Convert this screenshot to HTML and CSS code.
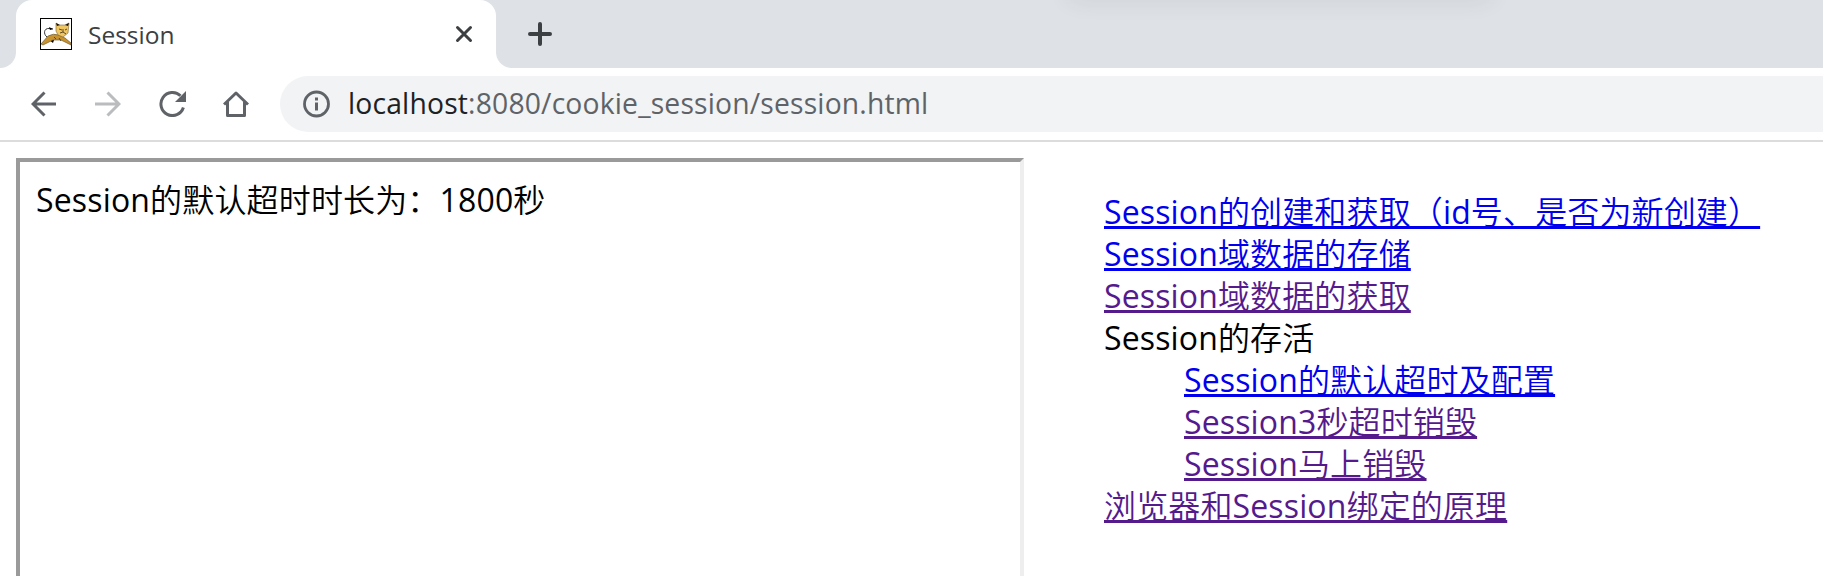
FILE: index.html
```html
<!DOCTYPE html>
<html lang="zh-CN">
<head>
<meta charset="utf-8">
<title>Session</title>
<link rel="stylesheet" href="styles.css">
</head>
<body>
<header class="tabstrip">
  <div class="tab">
    <svg class="favicon" width="32" height="32" viewBox="0 0 32 32">
      <rect x=".5" y=".5" width="31" height="31" fill="#fff" stroke="#000"/>
      <path d="M7 19C3 16 4 10 9 10.500L13 11" fill="none" stroke="#222" stroke-width=".9"/>
      <path d="M9 9l4 2-3 1zM8 21l6 1-1 3z" fill="#000"/>
      <path d="M1 26L8 18Q13 15 19 17L25 20L31 25V27L21 22L13 22L3 27Z" fill="#c8932f" stroke="#5d4923" stroke-width=".6"/>
      <path d="M16 5l3 2h6l4-2-1 10-5 4-5-2-2-4z" fill="#efc662" stroke="#7b6333" stroke-width=".6"/>
      <path d="M16 5l4 2-3 1zM29 5l-4 2 3 1z" fill="#111"/>
      <path d="M19 11l3 1m5-1l-2 1m-5 3l3-1 3 2m-3-5v3m-9 5l2 2m3-1l2 3" fill="none" stroke="#493d24" stroke-width=".9"/>
    </svg>
    <span class="tab-title">Session</span>
    <svg class="tab-close" width="18" height="18" viewBox="0 0 18 18"><path d="M2.500 2.500l13 13m0-13l-13 13" stroke="#3c4043" stroke-width="3" stroke-linecap="round"/></svg>
  </div>
  <svg class="new-tab" width="24" height="24" viewBox="0 0 24 24"><path d="M12 2v20M2 12h20" stroke="#3c4043" stroke-width="4" stroke-linecap="round"/></svg>
  <div class="top-shadow"></div>
</header>
<nav class="toolbar">
  <svg class="tool" width="26" height="26" viewBox="0 0 26 26"><path d="M25 13H2M13.500 1.500L2 13l11.500 11.500" fill="none" stroke="#5f6368" stroke-width="3"/></svg>
  <svg class="tool" width="26" height="26" viewBox="0 0 26 26"><path d="M0 13h24M12.500 1.500L24 13 12.500 24.500" fill="none" stroke="#babcbe" stroke-width="3"/></svg>
  <svg class="tool" width="28" height="26" viewBox="0 0 28 26"><path d="M21.500 4.800A11.500 11.500 0 1 0 24.400 16.500" fill="none" stroke="#5f6368" stroke-width="3"/><path d="M27 0v11H16z" fill="#5f6368"/></svg>
  <svg class="tool" width="26" height="26" viewBox="0 0 26 26"><path d="M1 13.500L13 2l12 11.500M4.500 11v13.500h17V11" fill="none" stroke="#5f6368" stroke-width="3" stroke-linejoin="round"/></svg>
  <div class="omnibox">
    <svg width="28" height="28" viewBox="0 0 28 28"><circle cx="14.500" cy="14" r="12" fill="none" stroke="#5f6368" stroke-width="2.800"/><path d="M13 7.500h3v3h-3zM13 12.500h3v8h-3z" fill="#5f6368"/></svg>
    <div class="url"><span class="host">localhost</span>:8080/cookie_session/session.html</div>
  </div>
</nav>
<main class="page">
  <section class="frame">Session的默认超时时长为：1800秒</section>
  <ul class="links">
    <li><a class="link" href="#">Session的创建和获取（id号、是否为新创建）</a></li>
    <li><a class="link" href="#">Session域数据的存储</a></li>
    <li><a class="link visited" href="#">Session域数据的获取</a></li>
    <li>Session的存活
      <ul class="sublinks">
        <li><a class="link" href="#">Session的默认超时及配置</a></li>
        <li><a class="link visited" href="#">Session3秒超时销毁</a></li>
        <li><a class="link visited" href="#">Session马上销毁</a></li>
      </ul>
    </li>
    <li><a class="link visited" href="#">浏览器和Session绑定的原理</a></li>
  </ul>
</main>
</body>
</html>
```
FILE: styles.css
```css
* { box-sizing: border-box; }
body {
  margin: 0;
  height: 576px;
  overflow: hidden;
  display: flex;
  flex-direction: column;
  background: #fff;
  color: #000;
  font-family: "Open Sans", "Noto Sans CJK SC DemiLight", "Noto Sans CJK SC", sans-serif;
}
svg { display: block; flex: none; }
.tabstrip {
  position: relative;
  overflow: hidden;
  display: flex;
  flex: none;
  height: 68px;
  padding-left: 16px;
  background: #dee1e6;
}
.tab {
  position: relative;
  display: flex;
  width: 480px;
  padding: 18px 24px 0;
  border-radius: 16px 16px 0 0;
  background: #fff;
}
.tab::before, .tab::after {
  content: "";
  position: absolute;
  bottom: 0;
  width: 16px;
  height: 16px;
}
.tab::before { left: -16px; background: radial-gradient(circle at 0 0, transparent 15.5px, #fff 16.5px); }
.tab::after { right: -16px; background: radial-gradient(circle at 100% 0, transparent 15.5px, #fff 16.5px); }
.tab-title {
  flex: 1;
  margin-left: 16px;
  font-size: 24.5px;
  line-height: 34px;
  color: #3c4043;
}
.tab-close { margin: 7px -1px 0 0; }
.new-tab { margin: 22px 0 0 32px; }
.top-shadow {
  position: absolute;
  left: 1070px;
  top: -22px;
  width: 420px;
  height: 18px;
  box-shadow: 0 2px 24px rgba(60, 64, 67, .12);
}
.toolbar {
  display: flex;
  flex: none;
  align-items: center;
  height: 74px;
  padding-left: 31px;
  border-bottom: 2px solid #dcdcdc;
}
.tool { margin-right: 38px; }
.tool:nth-child(3) { margin-right: 36px; }
.omnibox {
  display: flex;
  flex: 1;
  align-items: center;
  height: 56px;
  margin-left: -7px;
  padding-left: 22px;
  border-radius: 28px 0 0 28px;
  background: #f1f3f4;
}
.url {
  margin-left: 18px;
  padding-bottom: 2px;
  font-size: 28.3px;
  letter-spacing: .17px;
  line-height: 40px;
  color: #5f6368;
  white-space: nowrap;
}
.host { color: #202124; }
.page {
  display: flex;
  flex: 1;
  min-height: 0;
  gap: 80px;
  padding: 16px 16px 0;
  font-size: 32px;
  line-height: 42px;
  white-space: nowrap;
}
.frame {
  flex: none;
  width: 1008px;
  padding: 17px 16px 0;
  border: solid #9a9a9a;
  border-width: 4px 4px 0;
  border-right-color: #eee;
  letter-spacing: .16px;
}
.links, .sublinks { margin: 0; padding: 0; list-style: none; }
.links { padding-top: 33px; letter-spacing: .14px; }
.sublinks { padding-left: 80px; }
.link {
  color: #00e;
  text-decoration: underline 3px;
  text-underline-offset: 2px;
  text-decoration-skip-ink: none;
}
.visited { color: #551a8b; }
```
